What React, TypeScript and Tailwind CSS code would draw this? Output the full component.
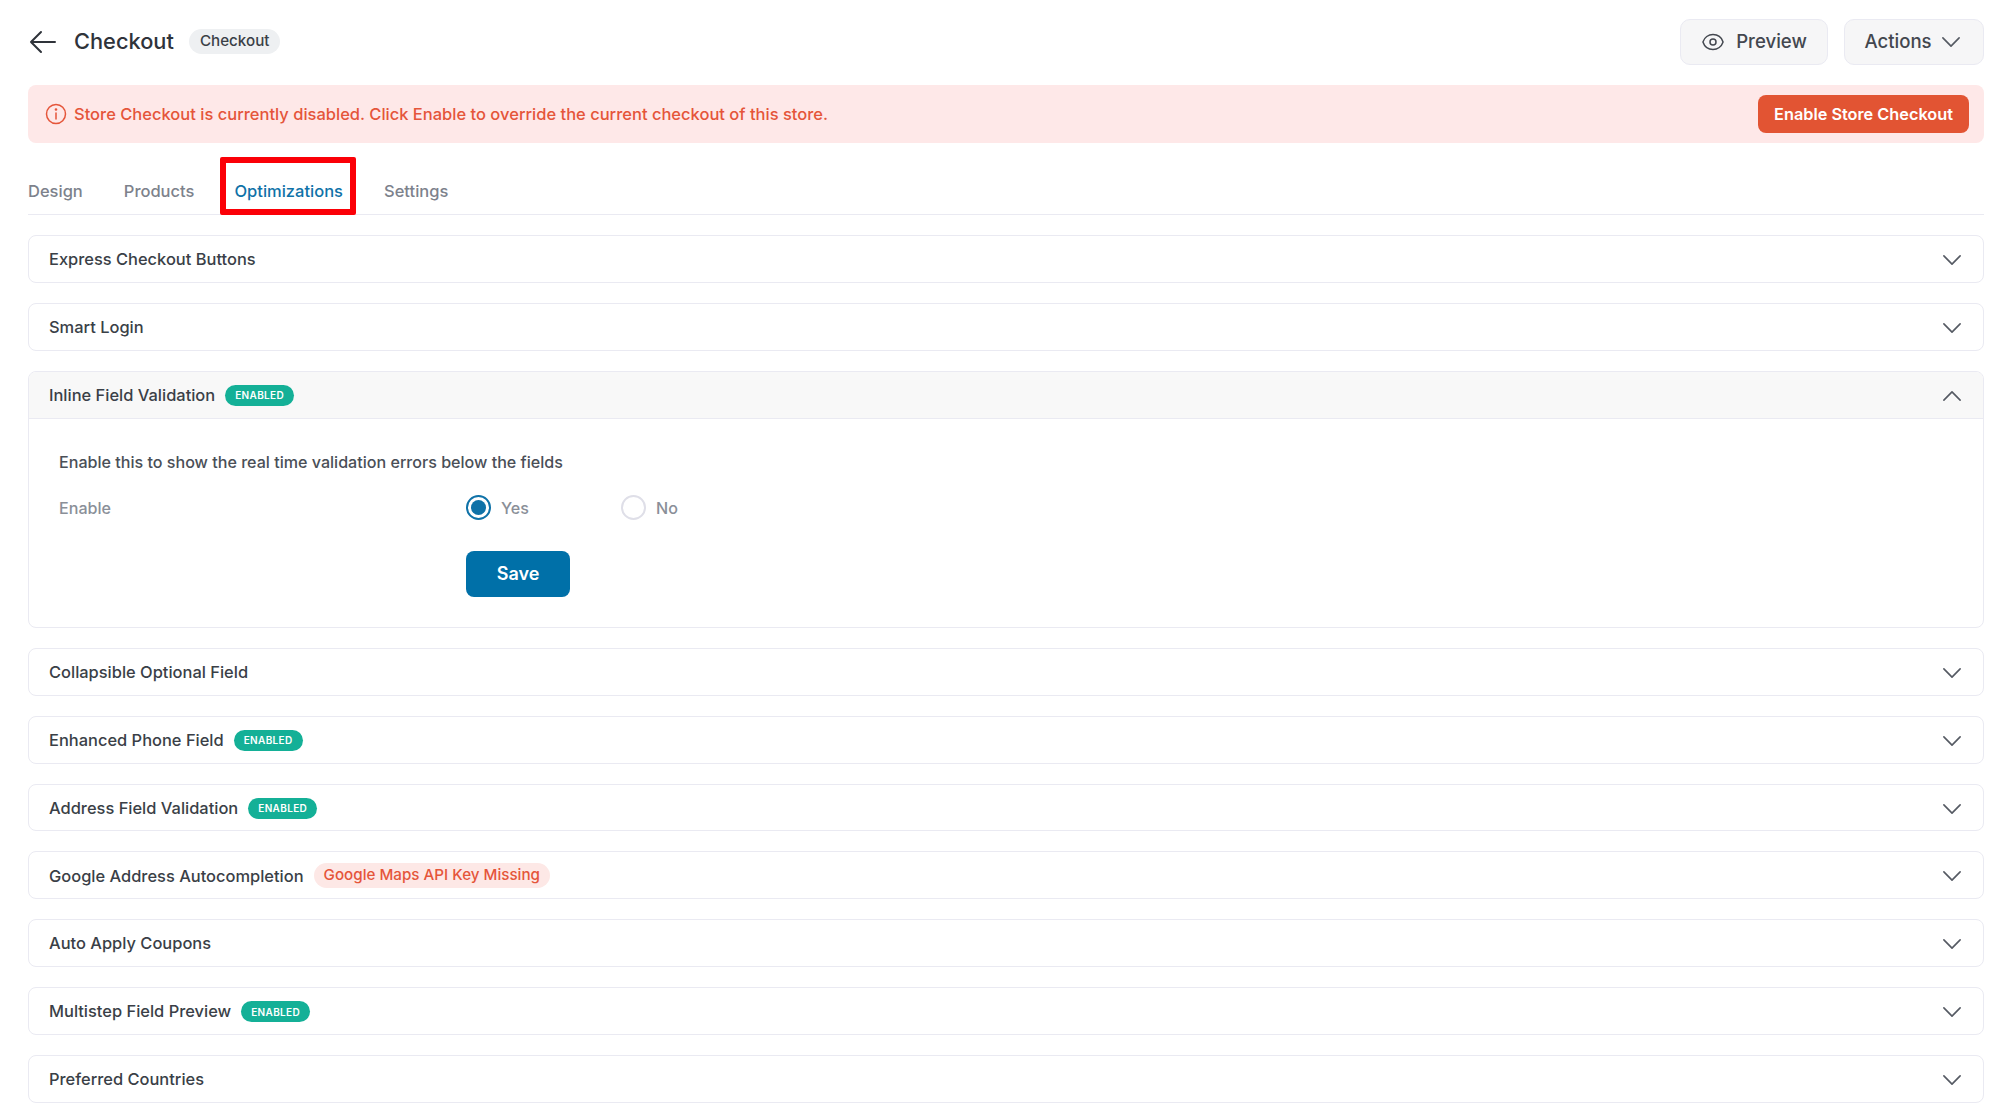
const Chevron = ({ up = false }: { up?: boolean }) => (
  <svg viewBox="0 0 24 24" fill="none" stroke="#555a63" strokeWidth={1.5} strokeLinecap="round" strokeLinejoin="round" className="w-[26px] h-[26px] shrink-0 mt-[1px]">
    <path d={up ? "M4.5 15.75l7.5-7.5 7.5 7.5" : "M19.5 8.25l-7.5 7.5-7.5-7.5"} />
  </svg>
);

const Enabled = () => (
  <span className="inline-flex items-center h-[21px] px-[10px] rounded-full bg-[#14b097] text-white text-[10px] font-semibold tracking-[0.35px] leading-none">ENABLED</span>
);

const Row = ({ title, badge, missing }: { title: string; badge?: boolean; missing?: boolean }) => (
  <div className="h-[47.9px] pt-[1px] flex items-center justify-between pl-[20px] pr-[18px] bg-white border border-[#eaeaf2] rounded-[8px]">
    <div className="flex items-center gap-[10px]">
      <span className="text-[16.45px] font-medium text-[#3a3f47]">{title}</span>
      {badge && <Enabled />}
      {missing && <span className="inline-flex items-center h-[25px] px-[10px] rounded-full bg-[#fde8e6] text-[#e5553a] text-[15.2px] font-medium">Google Maps API Key Missing</span>}
    </div>
    <Chevron />
  </div>
);

export default function App() {
  return (
    <div className="w-[1999px] h-[1116px] bg-white overflow-hidden pl-[28px] pr-[15px] font-['Inter',sans-serif]">
      <header className="h-[85px] flex items-center justify-between pb-[2px]">
        <div className="flex items-center">
          <svg viewBox="0 0 24 24" fill="none" stroke="#2f333a" strokeWidth={1.5} strokeLinecap="round" strokeLinejoin="round" className="w-[32px] h-[32px] -ml-[1px]">
            <path d="M10.5 19.5L3 12l7.5-7.5M3 12h18" />
          </svg>
          <h1 className="ml-[15px] text-[21.8px] font-medium text-[#2f333a]">Checkout</h1>
          <span className="ml-[15px] inline-flex items-center h-[25px] px-[11px] rounded-full bg-[#eef0f2] text-[15.2px] font-medium text-[#3a3f47]">Checkout</span>
        </div>
        <div className="flex items-center gap-[16px]">
          <button className="h-[46px] w-[148px] -ml-[1px] flex items-center justify-center gap-[11px] bg-[#f6f6f7] border border-[#eaeaf2] rounded-[10px] text-[18.6px] font-medium text-[#43474f]">
            <svg viewBox="0 0 24 24" fill="none" stroke="#43474f" strokeWidth={1.5} strokeLinecap="round" strokeLinejoin="round" className="w-[24px] h-[24px]">
              <path d="M2.04 12.32a1 1 0 0 1 0-.64C3.42 7.51 7.36 4.5 12 4.5s8.57 3 9.96 7.18a1 1 0 0 1 0 .64C20.58 16.49 16.64 19.5 12 19.5s-8.57-3-9.96-7.18z" />
              <circle cx="12" cy="12" r="3" />
            </svg>
            Preview
          </button>
          <button className="h-[46px] w-[140px] flex items-center justify-center gap-[6px] bg-[#f6f6f7] border border-[#eaeaf2] rounded-[10px] text-[18.6px] font-medium text-[#43474f]">
            Actions
            <Chevron />
          </button>
        </div>
      </header>

      <div className="h-[58px] flex items-center justify-between pl-[16px] pr-[15px] bg-[#fee8e8] rounded-[8px]">
        <div className="flex items-center gap-[6px] text-[16.5px] font-medium text-[#e5553a]">
          <svg viewBox="0 0 24 24" fill="none" stroke="#e5553a" strokeWidth={1.5} strokeLinecap="round" className="w-[24px] h-[24px]">
            <circle cx="12" cy="12" r="9.5" />
            <path d="M12 11v6" />
            <circle cx="12" cy="7.5" r="0.6" fill="#e5553a" />
          </svg>
          Store Checkout is currently disabled. Click Enable to override the current checkout of this store.
        </div>
        <button className="h-[38px] w-[211px] bg-[#e25433] rounded-[8px] text-white text-[16.3px] font-semibold">Enable Store Checkout</button>
      </div>

      <nav className="mt-[14px] h-[58px] flex items-end border-b border-[#eaeaf2] text-[16.5px] font-medium text-[#7d828c]">
        <span className="h-[44px] pb-[1px] flex items-center">Design</span>
        <span className="h-[44px] pb-[1px] flex items-center ml-[41px]">Products</span>
        <span className="relative h-[44px] pb-[1px] flex items-center ml-[40px] text-[#0f72a8]">
          Optimizations
          <span className="absolute -left-[14px] -right-[13px] -top-[13px] -bottom-[1px] border-[6px] border-[#fb0007] rounded-[2px]" />
        </span>
        <span className="h-[44px] pb-[1px] flex items-center ml-[41px]">Settings</span>
      </nav>

      <div className="mt-[20px] flex flex-col gap-[20px]">
        <Row title="Express Checkout Buttons" />
        <Row title="Smart Login" />
        <div className="h-[257px] border border-[#eaeaf2] rounded-[8px] overflow-hidden bg-white">
          <div className="h-[47px] pt-[1px] flex items-center justify-between pl-[20px] pr-[18px] bg-[#f8f8f8] border-b border-[#eaeaf2]">
            <div className="flex items-center gap-[10px]">
              <span className="text-[16.45px] font-medium text-[#3a3f47]">Inline Field Validation</span>
              <Enabled />
            </div>
            <Chevron up />
          </div>
          <div className="pl-[30px] pt-[31px]">
            <p className="text-[16.1px] font-medium text-[#4a4f57] leading-[24px]">Enable this to show the real time validation errors below the fields</p>
            <div className="mt-[18px] h-[32px] flex items-center text-[16.1px] font-medium text-[#8a8f98]">
              <span className="w-[407px]">Enable</span>
              <span className="w-[25px] h-[25px] rounded-full border-2 border-[#0f72a8] flex items-center justify-center">
                <span className="w-[15px] h-[15px] rounded-full bg-[#0f72a8]" />
              </span>
              <span className="ml-[10px] w-[120px]">Yes</span>
              <span className="w-[25px] h-[25px] rounded-full border-2 border-[#dfdfe8]" />
              <span className="ml-[10px]">No</span>
            </div>
            <button className="mt-[27px] ml-[407px] w-[104px] h-[46px] rounded-[8px] bg-[#0070a8] text-white text-[18px] font-semibold">Save</button>
          </div>
        </div>
        <Row title="Collapsible Optional Field" />
        <Row title="Enhanced Phone Field" badge />
        <Row title="Address Field Validation" badge />
        <Row title="Google Address Autocompletion" missing />
        <Row title="Auto Apply Coupons" />
        <Row title="Multistep Field Preview" badge />
        <Row title="Preferred Countries" />
      </div>
    </div>
  );
}
